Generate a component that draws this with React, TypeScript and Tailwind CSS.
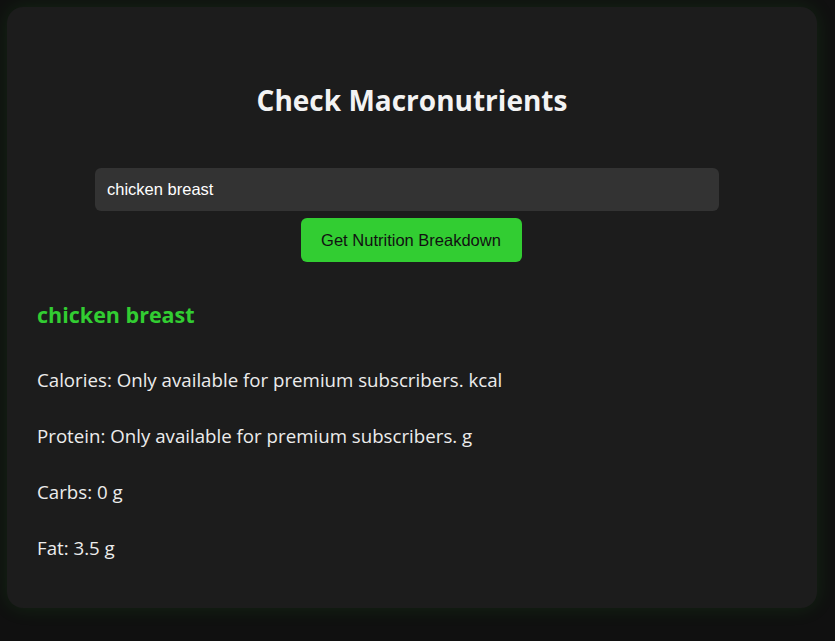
import { useState } from 'react';

const stats = [
  { label: 'Calories', value: 'Only available for premium subscribers.', unit: 'kcal' },
  { label: 'Protein', value: 'Only available for premium subscribers.', unit: 'g' },
  { label: 'Carbs', value: '0', unit: 'g' },
  { label: 'Fat', value: '3.5', unit: 'g' },
];

export default function App() {
  const [query, setQuery] = useState('chicken breast');

  return (
    <div className="min-h-[641px] w-full bg-[#101010] pt-[7px] pl-[7px] font-['Segoe_UI','Open_Sans',sans-serif]">
      <div className="w-[810px] h-[601px] rounded-2xl bg-[#1c1c1c] shadow-[0_0_20px_rgba(40,200,40,0.12)] px-[30px] pt-[75px] flex flex-col">
        <h2 className="text-center text-[28px] leading-[36px] font-bold text-[#f3f3f3]">Check Macronutrients</h2>

        <input
          value={query}
          onChange={e => setQuery(e.target.value)}
          className="mt-[50px] ml-[58px] w-[624px] h-[43px] rounded-md bg-[#333333] px-3 text-[16.5px] text-white font-['Liberation_Sans',Arial,sans-serif] focus:outline-none"
        />

        <button className="mt-[7px] self-center ml-[-2px] w-[221px] h-[44px] rounded-md bg-[#32cd32] text-[16.5px] text-[#111] font-['Liberation_Sans',Arial,sans-serif]">
          Get Nutrition Breakdown
        </button>

        <h3 className="mt-[39px] text-[21.5px] leading-[28px] font-bold text-[#32cd32]">{query}</h3>

        <div className="mt-[39px] flex flex-col gap-[32px]">
          {stats.map(s => (
            <p key={s.label} className="text-[18.7px] leading-[24px] text-[#ececec]">
              {s.label}: {s.value} {s.unit}
            </p>
          ))}
        </div>
      </div>
    </div>
  );
}
